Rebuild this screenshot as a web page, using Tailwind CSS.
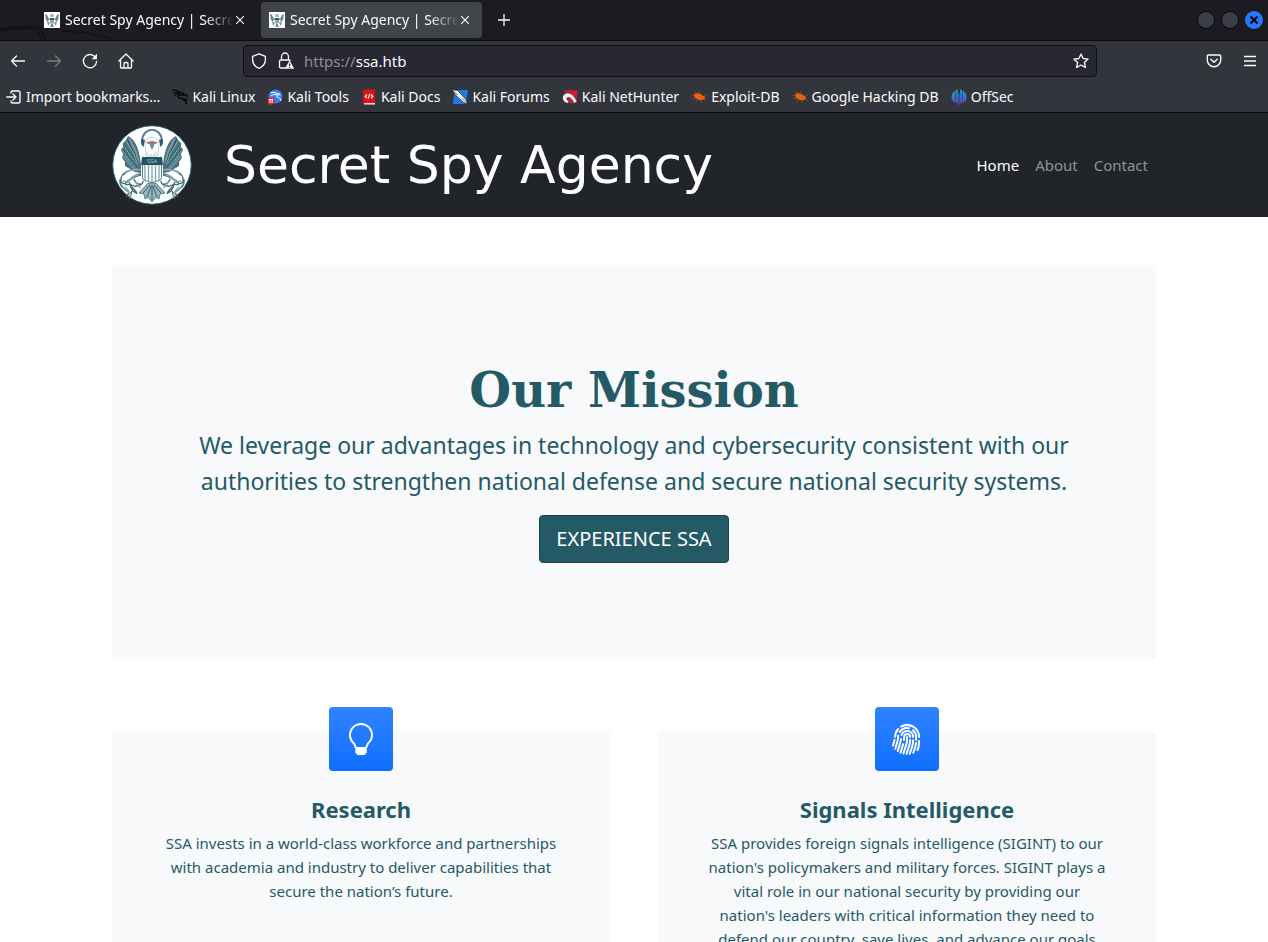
<!DOCTYPE html>
<html lang="en">
<head>
<meta charset="utf-8">
<meta name="viewport" content="width=device-width, initial-scale=1">
<title>Secret Spy Agency | Secret Security Service</title>
<script src="https://cdn.jsdelivr.net/npm/@tailwindcss/browser@4"></script>
</head>
<body class="flex h-screen flex-col overflow-hidden bg-white font-['Noto_Sans',sans-serif]">

<svg class="hidden" aria-hidden="true">
  <symbol id="mini-eagle" viewBox="0 0 16 16">
    <path fill="#fff" d="M0 0h16v16H0z"/>
    <path d="M1 2l2 1 2 4-1 3-2-2zM15 2l-2 1-2 4 1 3 2-2z" fill="#688692"/>
    <path d="M6.500 2h3l.5 3h-4z" fill="#a3b4bc"/><path d="M5.500 6h5v2h-5z" fill="#315d6e"/>
    <path d="M6 8h4v3l-2 1-2-1z" fill="#8fa6b0"/><path d="M3 9l3 2-2 3zM13 9l-3 2 2 3zM7 12h2l1 3H6z" fill="#7b959f"/>
  </symbol>
  <symbol id="beetle" viewBox="0 0 16 16">
    <path d="M3 5.500C5 3.500 9 4 11 6.200l2.500 1.200.7 2.100-2 1.300C9 12 5.500 10.500 3.500 8z" fill="#ec5e10"/>
    <path d="M5 4.500L3.500 2.800M8 4.200l.8-1.700M3 7L.8 6M4.500 9.500l-3 .3M7 11l-2.500 2.200M10.500 11l-.5 2.500M13.200 7.500L15.500 6M13.500 10l1.700 2" fill="none" stroke="#b5521c" stroke-width=".8"/>
  </symbol>
  <symbol id="cross" viewBox="0 0 10 10"><path d="M1.200 1.200l7.600 7.600M8.800 1.200L1.200 8.800" fill="none" stroke="currentColor" stroke-width="1.100"/></symbol>
</svg>

<div class="shrink-0 text-[#fbfbfe]">
  <div class="relative flex h-10 items-center overflow-hidden bg-[#1c1b22] pl-9 pr-[5px] text-sm">
    <svg class="absolute bottom-0 left-0 h-4 w-36" viewBox="0 0 144 16" aria-hidden="true"><path d="M0 5Q20 1 40 3l6 13M0 7q18-4 37-2l5 11M62 7q28 0 52 9" fill="none" stroke="#121217" stroke-width="2"/></svg>
    <div class="relative flex h-9 w-[221px] items-center rounded pl-2 pr-3">
      <svg class="size-4 shrink-0" aria-hidden="true"><use href="#mini-eagle"/></svg>
      <a href="#" class="ml-[5px] w-[170px] overflow-hidden whitespace-nowrap [mask-image:linear-gradient(to_right,#000_82%,transparent)]">Secret Spy Agency | Secret</a>
      <button aria-label="Close tab" class="shrink-0"><svg class="size-[10px]"><use href="#cross"/></svg></button>
    </div>
    <div class="relative ml-1 flex h-9 w-[221px] items-center rounded bg-[#42444c] pl-2 pr-3">
      <svg class="size-4 shrink-0" aria-hidden="true"><use href="#mini-eagle"/></svg>
      <a href="#" class="ml-[5px] w-[170px] overflow-hidden whitespace-nowrap [mask-image:linear-gradient(to_right,#000_82%,transparent)]">Secret Spy Agency | Secret</a>
      <button aria-label="Close tab" class="shrink-0"><svg class="size-[10px]"><use href="#cross"/></svg></button>
    </div>
    <button aria-label="New tab" class="ml-4"><svg class="size-3" viewBox="0 0 12 12"><path d="M6 0v12M0 6h12" stroke="currentColor" stroke-width="1.300"/></svg></button>
    <div class="ml-auto flex items-center gap-1.5">
      <button aria-label="Minimize" class="size-[18px] rounded-full border border-[#08080b] bg-[#383d49]"></button>
      <button aria-label="Maximize" class="size-[18px] rounded-full border border-[#08080b] bg-[#383d49]"></button>
      <button aria-label="Close window" class="flex size-[18px] items-center justify-center rounded-full bg-[#2777ff]"><svg class="size-2.5" viewBox="0 0 10 10"><path d="M1.500 1.500l7 7M8.500 1.500l-7 7" stroke="#08080b" stroke-width="2.200"/></svg></button>
    </div>
  </div>

  <div class="flex h-[41px] items-center border-t border-[#0c0c0d] bg-[#33353d] pl-2.5 pr-2.5">
    <div class="flex w-[233px] items-center gap-5">
      <button aria-label="Back"><svg class="size-4" viewBox="0 0 16 16" fill="none" stroke="currentColor" stroke-width="1.300" stroke-linecap="round" stroke-linejoin="round"><path d="M14.500 8H1.500M6.500 3L1.500 8l5 5"/></svg></button>
      <button aria-label="Forward" class="text-[#7c7d82]"><svg class="size-4" viewBox="0 0 16 16" fill="none" stroke="currentColor" stroke-width="1.300" stroke-linecap="round" stroke-linejoin="round"><path d="M1.500 8h13M9.500 3l5 5-5 5"/></svg></button>
      <button aria-label="Reload"><svg class="size-4" viewBox="0 0 16 16"><path d="M13.600 4.600A6.600 6.600 0 1 0 14.600 8.500" fill="none" stroke="currentColor" stroke-width="1.300" stroke-linecap="round"/><path d="M15 .8v5.400H9.600z" fill="currentColor"/></svg></button>
      <button aria-label="Home"><svg class="size-4" viewBox="0 0 16 16" fill="none" stroke="currentColor" stroke-width="1.300" stroke-linejoin="round" stroke-linecap="round"><path d="M.9 8L8 1l7.100 7M2.500 7v7.200q0 .8.8.8h9.400q.8 0 .8-.8V7M6 15v-4.200Q6 9.500 7.300 9.500h1.400q1.300 0 1.300 1.300V15"/></svg></button>
    </div>
    <div class="flex h-8 w-[854px] items-center rounded border border-[#0f1014] bg-[#272833] px-[7px]">
      <svg class="size-4" viewBox="0 0 16 16" fill="none" stroke="currentColor" stroke-width="1.300" stroke-linejoin="round" aria-hidden="true"><path d="M8 .8l6.400 2.600v3.200c0 4-2.600 7.300-6.400 8.700-3.800-1.400-6.400-4.700-6.400-8.700V3.400z"/></svg>
      <svg class="ml-[10px] size-[18px]" viewBox="0 0 18 18" fill="none" stroke="currentColor" stroke-width="1.300" aria-hidden="true"><path d="M4.500 8V5a3.500 4 0 0 1 7 0v3M9 16H4q-1.500 0-1.500-1.500V9.500Q2.500 8 4 8h8q1.300 0 1.500 1"/><path d="M12.600 8.500l4.600 8.300H8z" fill="currentColor" stroke="none"/><path d="M12.600 11.500v2.600M12.600 14.900v1" stroke="#272833"/></svg>
      <label for="url" class="ml-[9px] cursor-text text-[15px] text-[#8f8f97]">https://</label>
      <input id="url" class="min-w-0 flex-1 bg-transparent text-[15px] outline-none" value="ssa.htb">
      <button aria-label="Bookmark this page"><svg class="size-4" viewBox="0 0 16 16" fill="none" stroke="currentColor" stroke-width="1.300" stroke-linejoin="round"><path d="M8 1l2.100 4.500 5 .6-3.700 3.400 1 5L8 12l-4.400 2.500 1-5L.9 6.100l5-.6z"/></svg></button>
    </div>
    <div class="ml-auto flex items-center gap-5">
      <button aria-label="Save to Pocket"><svg class="size-4" viewBox="0 0 16 16" fill="none" stroke="currentColor" stroke-width="1.400" stroke-linecap="round" stroke-linejoin="round"><path d="M2.500 2h11q1.200 0 1.200 1.200V7a6.700 6.700 0 0 1-13.400 0V3.200Q1.300 2 2.500 2zM4.800 6.200L8 9.300l3.200-3.100"/></svg></button>
      <button aria-label="Menu"><svg class="size-4" viewBox="0 0 16 16"><path d="M2 3.500h12M2 8h12M2 12.500h12" stroke="currentColor" stroke-width="1.300"/></svg></button>
    </div>
  </div>

  <nav aria-label="Bookmarks" class="flex h-8 items-center gap-3 whitespace-nowrap border-b border-[#0c0c0d] bg-[#33353d] pl-1.5 text-sm">
    <a href="#" class="flex items-center gap-1"><svg class="size-4" viewBox="0 0 16 16" fill="none" stroke="currentColor" stroke-width="1.400" stroke-linecap="round" stroke-linejoin="round"><path d="M5 4V3.500Q5 2 6.500 2h6Q14 2 14 3.500v9q0 1.500-1.500 1.500h-6Q5 14 5 12.500V12M.8 8H9M7 5l3 3-3 3"/></svg>Import bookmarks…</a>
    <a href="#" class="flex items-center gap-1"><svg class="size-4" viewBox="0 0 16 16" fill="none" stroke="#08080a" stroke-linecap="round"><path d="M.5 1.300q4-.6 6.500 1.500M1 4.500q3-1.700 6-.8M3 6.500q2-2 4.500-2" stroke-width="1.100"/><path d="M6 3.500c5 0 6 1.200 5.500 2.500-1 .5-2.500-.3-4 0-2 .6-1.600 3 .5 3.300 3 .3 5 1.200 6.500 5.200M11 5.200l3.500.8.800 1.500M12 10l3 1" stroke-width="1.500"/></svg>Kali Linux</a>
    <a href="#" class="flex items-center gap-1"><svg class="size-4" viewBox="0 0 16 16"><circle cx="8.500" cy="7.500" r="7" fill="#367bf0"/><path d="M3.500 4q4-1.500 6 .4 3 0 3.500 1.300-2 .3-3.500.3 0 2 2 2.500 2 .8 2.500 3.500M4 7q2-2 5-1.300" fill="none" stroke="#dce9ff" stroke-width="1.200"/><circle cx="4" cy="12" r="3.700" fill="#e0262d"/><path d="M2 10.500h4M3 10.500V14M5.100 10.500V14" stroke="#fff" fill="none"/></svg>Kali Tools</a>
    <a href="#" class="flex items-center gap-1"><svg class="size-4" viewBox="0 0 16 16"><path d="M2 1.500Q2 .5 3 .5h11V16H3.500Q2 16 2 14.500z" fill="#dc1118"/><path d="M3 14h11v1.500H3.500z" fill="#e6dede"/><path d="M6 5.500L4.200 7.300 6 9M10 5.500l1.800 1.800L10 9M8.700 4.800L7.300 9.700" fill="none" stroke="#fff" stroke-width="1.100"/></svg>Kali Docs</a>
    <a href="#" class="flex items-center gap-1"><svg class="size-4" viewBox="0 0 16 16"><path d="M2.500 1H16l-2 14H1z" fill="#1b78ef"/><path d="M.3.800l5.400.6 4.300 4.800 3.600 4 1.900 4.500-4.300-1.500-4.600-4.200-4-4z" fill="#fff" stroke="#15171c" stroke-width=".7"/><path d="M1.500 2l4 4M9 8.500l4 4" stroke="#15171c" stroke-width=".7"/></svg>Kali Forums</a>
    <a href="#" class="flex items-center gap-1"><svg class="size-4" viewBox="0 0 16 16"><path d="M3 1.500h12.500L14.500 14H2z" fill="#e5152b"/><path d="M.5 8C1.500 3.500 7 3 10 5.500c2.500 2 3.500 4 5.200 7L12 14.500C10.500 11 9 8.500 6.500 8.500c-2.500 0-2 2.700.5 3.700l-1 2.300C2 13.500 0 11 .5 8z" fill="#f5f5f5" stroke="#22252c" stroke-width=".7"/></svg>Kali NetHunter</a>
    <a href="#" class="flex items-center gap-1"><svg class="size-4"><use href="#beetle"/></svg>Exploit-DB</a>
    <a href="#" class="flex items-center gap-1"><svg class="size-4"><use href="#beetle"/></svg>Google Hacking DB</a>
    <a href="#" class="flex items-center gap-1"><svg class="size-4" viewBox="0 0 16 16"><defs><linearGradient id="off" x2="0" y2="1"><stop stop-color="#1ba6c4"/><stop offset="1" stop-color="#5b3fd6"/></linearGradient></defs><path d="M4 1.700v12.100Q.5 12 .5 8T4 1.700zM4.600 1.300L6.800.6v14l-2.200-.8zM7.400 4.500h1.200V16H7.400zM9.200.6l2.200.7v12.500l-2.200.8zM12 1.700q3.500 2.300 3.500 6.300T12 13.800z" fill="url(#off)"/></svg>OffSec</a>
  </nav>
</div>

<div class="min-h-0 flex-1 overflow-hidden text-[#245966]">
  <header class="bg-[#212529]">
    <div class="mx-auto flex h-[104px] max-w-[1044px] items-center">
      <a href="#" class="flex items-center gap-8 text-white">
        <svg class="size-20" viewBox="0 0 80 80" role="img" aria-label="SSA seal">
          <defs>
            <g id="wing" fill="none">
              <path d="M29 40C28 29 25 15 16 11L14 15l-3 3 0 4-2 3 2 4-1 4 3 4 0 4 5 3 5 3 6 1z" fill="#4a7482"/>
              <path d="M17 13l7 13 3 12M14 16l8 13 4 11M12 20l8 13 5 9M10.500 25l9 13 6 6M11 31l8 10 7 5" stroke="#a9bec6" stroke-width=".7"/>
              <path d="M15 14l8 15 4 11M12 19l8 13 5 10M11 24l8 12 6 7" stroke="#214f5d" stroke-width=".8"/>
              <path d="M18 15l8 20M13 23l11 15M13 31l10 11" stroke="#d3dfe3" stroke-width=".6" stroke-dasharray="1 1"/>
              <path d="M29 46C20 43 11 46 9 53c-1 4 2 7 5 5 5-4 8-7 15-8M29 49c-8 0-10 7-16 8M11 50q6-7 18-5M8 54q-1 7 6 11l6 4M13 60q5-2 6 2t5 6M17 57q2 5 8 4t6-5M18 62q5 1 7 7M22 54q2 6 8 5M17 68l-3 4M20 66l-3 8" stroke="#3c6b79" stroke-width="1.300"/>
              <path d="M12 48q6-4 17-3M11 56q5 2 8-2t8-4M13 62q5 4 6 10M23 57l6 6M10 60q3 6 9 9" stroke="#8fa9b1" stroke-width="1.400"/>
            </g>
          </defs>
          <circle cx="40" cy="40" r="39.300" fill="#fff" stroke="#2b5c6a" stroke-width="1"/>
          <use href="#wing"/><use href="#wing" transform="matrix(-1 0 0 1 80 0)"/>
          <path d="M30 16C31 1 49 1 50 16" fill="none" stroke="#5c8290" stroke-width="2"/>
          <path d="M29.500 14q-1.500 5 2 8l1.500-7zM50.500 14q1.500 5-2 8l-1.500-7z" fill="#2b5c6a"/>
          <path d="M33 19q2-7 7-7t7 7l-1 12H34z" fill="#fff" stroke="#a3b8c0" stroke-width=".7"/>
          <path d="M37.500 16h5l-.5 5-2 4-2-4z" fill="#6e8b96"/><path d="M35 17.500l3 .7M45 17.500l-3 .7" stroke="#e33" stroke-width="1.600"/>
          <path d="M36 26v4M39 28v3M42 28v3M44 26v4" stroke="#aabdc4" stroke-width=".7"/>
          <path d="M30.500 39h19v13q0 4-3.500 4h-2l-4 2-4-2h-2q-3.500 0-3.500-4z" fill="#fff" stroke="#54808e"/>
          <path d="M33 40v15M36.500 40v16M40 40v17M43.500 40v16M47 40v15" stroke="#7ba3b0" stroke-width="1.300"/>
          <path d="M30 32h20l1 8H29z" fill="#1f5564"/>
          <text x="40" y="37.500" text-anchor="middle" font-size="5" font-family="DejaVu Sans, sans-serif" fill="#b5cbd1">SSA</text>
          <path d="M36 58l-9 10 5 1 1 5 3-2 4 5 4-5 3 2 1-5 5-1-9-10z" fill="#9bb2ba" stroke="#3c6b79" stroke-width=".8"/>
          <path d="M38 60l-7 8M39 61l-4 11M40 60v15M41 61l4 11M42 60l7 8" stroke="#2b5c6a" stroke-width=".9"/>
        </svg>
        <span class="whitespace-nowrap font-['DejaVu_Sans',sans-serif] text-[52px] leading-none">Secret Spy Agency</span>
      </a>
      <nav aria-label="Main" class="ml-auto flex gap-4 pr-2 text-[15px] leading-6 text-[#909294]">
        <a href="#" class="text-white">Home</a><a href="#">About</a><a href="#">Contact</a>
      </nav>
    </div>
  </header>

  <main class="mx-auto max-w-[1044px] pt-12">
    <section class="mb-[72px] rounded bg-[#f8f9fa] px-12 pb-24 pt-24 text-center">
      <h1 class="mb-2 font-['DejaVu_Serif',serif] text-5xl font-bold leading-[58px]">Our Mission</h1>
      <p class="mb-4 text-[23px] leading-9">We leverage our advantages in technology and cybersecurity consistent with our<br>authorities to strengthen national defense and secure national security systems.</p>
      <a href="#" class="inline-block rounded border border-[#1d4853] bg-[#245966] px-4 py-2 text-xl leading-[30px] text-white">EXPERIENCE SSA</a>
    </section>

    <div class="grid grid-cols-2 gap-12">
      <section class="rounded bg-[#f8f9fa] px-8 pb-12 text-center">
        <div class="mx-auto -mt-6 mb-6 flex size-16 items-center justify-center rounded bg-linear-to-b from-[#2f83ff] to-[#0d6efd] text-white">
          <svg class="size-8" viewBox="0 0 16 16" fill="currentColor" aria-hidden="true"><path d="M2 6a6 6 0 1 1 10.174 4.310c-.203.196-.359.400-.453.619l-.762 1.769A.5.5 0 0 1 10.500 13a.5.5 0 0 1 0 1 .5.5 0 0 1 0 1l-.224.447a1 1 0 0 1-.894.553H6.618a1 1 0 0 1-.894-.553L5.500 15a.5.5 0 0 1 0-1 .5.5 0 0 1 0-1 .5.5 0 0 1-.460-.302l-.761-1.770a1.964 1.964 0 0 0-.453-.618A5.984 5.984 0 0 1 2 6zm6-5a5 5 0 0 0-3.479 8.592c.263.254.514.564.676.941L5.830 12h4.342l.632-1.467c.162-.377.413-.687.676-.941A5 5 0 0 0 8 1z"/></svg>
        </div>
        <h2 class="mb-2 text-[22px] font-bold leading-7">Research</h2>
        <p class="text-[15px] leading-6">SSA invests in a world-class workforce and partnerships<br>with academia and industry to deliver capabilities that<br>secure the nation’s future.</p>
      </section>
      <section class="rounded bg-[#f8f9fa] px-8 pb-12 text-center">
        <div class="mx-auto -mt-6 mb-6 flex size-16 items-center justify-center rounded bg-linear-to-b from-[#2f83ff] to-[#0d6efd] text-white">
          <svg class="size-8" viewBox="0 0 16 16" fill="currentColor" aria-hidden="true"><path d="M8.060 6.500a.5.5 0 0 1 .5.5v.776a11.500 11.500 0 0 1-.552 3.519l-1.331 4.140a.5.5 0 0 1-.952-.305l1.330-4.141a10.500 10.500 0 0 0 .504-3.213V7a.5.5 0 0 1 .5-.5Z"/><path d="M6.060 7a2 2 0 1 1 4 0 .5.5 0 1 1-1 0 1 1 0 1 0-2 0v.332c0 .409-.022.816-.066 1.221A.5.5 0 0 1 6 8.447c.040-.370.060-.742.060-1.115V7Zm3.509 1a.5.5 0 0 1 .487.513 11.500 11.500 0 0 1-.587 3.339l-1.266 3.800a.5.5 0 0 1-.949-.317l1.267-3.800a10.500 10.500 0 0 0 .535-3.048A.5.5 0 0 1 9.569 8Zm-3.356 2.115a.5.5 0 0 1 .330.626L5.240 14.939a.5.5 0 1 1-.955-.296l1.303-4.199a.5.5 0 0 1 .625-.329Z"/><path d="M4.759 5.833A3.501 3.501 0 0 1 11.559 7a.5.5 0 0 1-1 0 2.500 2.500 0 0 0-4.857-.833.5.5 0 1 1-.943-.334Zm.3 1.670a.5.5 0 0 1 .449.546 10.720 10.720 0 0 1-.4 2.031l-1.222 4.072a.5.5 0 1 1-.958-.287L4.150 9.793a9.720 9.720 0 0 0 .363-1.842.5.5 0 0 1 .546-.449Zm6 .647a.5.5 0 0 1 .5.5c0 1.280-.213 2.552-.632 3.762l-1.090 3.145a.5.5 0 0 1-.944-.327l1.089-3.145c.382-1.105.578-2.266.578-3.435a.5.5 0 0 1 .5-.5Z"/><path d="M3.902 4.222a4.996 4.996 0 0 1 5.202-2.113.5.5 0 0 1-.208.979 3.996 3.996 0 0 0-4.163 1.690.5.5 0 0 1-.831-.556Zm6.720-.955a.5.5 0 0 1 .705-.052A4.990 4.990 0 0 1 13.059 7v1.500a.5.5 0 1 1-1 0V7a3.990 3.990 0 0 0-1.386-3.028.5.5 0 0 1-.051-.705ZM3.680 5.842a.5.5 0 0 1 .422.568c-.029.192-.044.390-.044.590 0 .710-.1 1.417-.298 2.100l-1.140 3.923a.5.5 0 1 1-.960-.279L2.800 8.821A6.531 6.531 0 0 0 3.058 7c0-.250.019-.496.054-.736a.5.5 0 0 1 .568-.422Zm8.882 3.660a.5.5 0 0 1 .456.540c-.084 1-.298 1.986-.640 2.934l-.744 2.068a.5.5 0 0 1-.941-.338l.745-2.070a10.510 10.510 0 0 0 .584-2.678.5.5 0 0 1 .540-.456Z"/><path d="M4.810 1.370A6.500 6.500 0 0 1 14.560 7a.5.5 0 1 1-1 0 5.500 5.500 0 0 0-8.250-4.765.5.5 0 0 1-.5-.865Zm-.890 1.257a.5.5 0 0 1 .040.706A5.478 5.478 0 0 0 2.560 7a.5.5 0 0 1-1 0c0-1.664.626-3.184 1.655-4.333a.5.5 0 0 1 .706-.040ZM1.915 8.020a.5.5 0 0 1 .346.616l-.779 2.767a.5.5 0 1 1-.962-.270l.778-2.767a.5.5 0 0 1 .617-.346Zm12.150.481a.5.5 0 0 1 .490.510c-.030 1.499-.161 3.025-.727 4.533l-.070.187a.5.5 0 0 1-.936-.351l.070-.187c.506-1.350.634-2.740.663-4.202a.5.5 0 0 1 .510-.490Z"/></svg>
        </div>
        <h2 class="mb-2 text-[22px] font-bold leading-7">Signals Intelligence</h2>
        <p class="text-[15px] leading-6">SSA provides foreign signals intelligence (SIGINT) to our<br>nation's policymakers and military forces. SIGINT plays a<br>vital role in our national security by providing our<br>nation's leaders with critical information they need to<br>defend our country, save lives, and advance our goals</p>
      </section>
    </div>
  </main>
</div>
</body>
</html>
